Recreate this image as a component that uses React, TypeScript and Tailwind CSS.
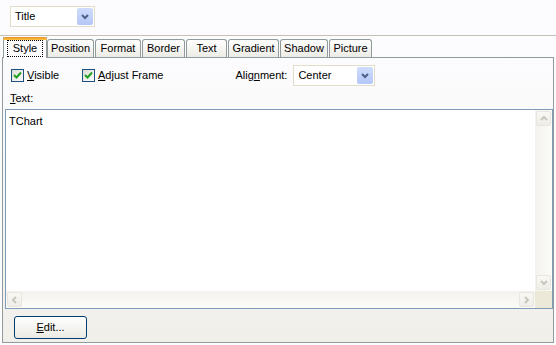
import React from "react";

const tabs = [
  { label: "Position", w: "w-[47px]" },
  { label: "Format", w: "w-[46px]" },
  { label: "Border", w: "w-[43px]" },
  { label: "Text", w: "w-[41px]" },
  { label: "Gradient", w: "w-[51px]" },
  { label: "Shadow", w: "w-[48px]" },
  { label: "Picture", w: "w-[43px]" },
];

function Chevron({ dir, color }: { dir: "up" | "down" | "left" | "right"; color: string }) {
  const paths = {
    down: "M1 2 L4 5 L7 2",
    up: "M1 5 L4 2 L7 5",
    left: "M5 1 L2 4 L5 7",
    right: "M2 1 L5 4 L2 7",
  };
  return (
    <svg width="8" height="8" viewBox="0 0 8 8">
      <path d={paths[dir]} fill="none" stroke={color} strokeWidth="2" />
    </svg>
  );
}

function ComboBox({ value, w }: { value: string; w: string }) {
  return (
    <div className={`${w} h-[21px] border border-[#e2ddc8] bg-white flex items-center p-px`}>
      <span className="flex-1 pl-[3px] text-[11px] text-black">{value}</span>
      <div className="w-[16px] h-[17px] rounded-[2px] bg-gradient-to-b from-[#cfdcfd] to-[#b4c7f6] flex items-center justify-center">
        <Chevron dir="down" color="#4d6185" />
      </div>
    </div>
  );
}

function CheckBox({ children }: { children: React.ReactNode }) {
  return (
    <div className="flex items-center gap-[3px]">
      <div className="w-[13px] h-[13px] border border-[#1c5180] bg-gradient-to-br from-[#dcdbd5] to-white flex items-center justify-center">
        <svg width="9" height="9" viewBox="0 0 9 9">
          <path d="M1 4 L3.5 6.5 L8 1.5" fill="none" stroke="#21a121" strokeWidth="2" />
        </svg>
      </div>
      <span className="text-[11px] text-black">{children}</span>
    </div>
  );
}

function ScrollBtn({ dir }: { dir: "up" | "down" | "left" | "right" }) {
  return (
    <div className="w-[15px] h-[15px] rounded-[2px] border border-[#e8e6dd] bg-gradient-to-b from-[#f9f8f4] to-[#eeede7] flex items-center justify-center">
      <Chevron dir={dir} color="#c9c7bd" />
    </div>
  );
}

export default function App() {
  return (
    <div
      className="w-[556px] h-[345px] bg-[#fcfcfe] overflow-hidden text-black"
      style={{ fontFamily: "'Liberation Sans', Arial, sans-serif" }}
    >
      {/* Top selector */}
      <div className="h-[35px] pl-[10px] pt-[6px]">
        <ComboBox value="Title" w="w-[85px]" />
      </div>
      <div className="h-px bg-[#c4c2b8]" />

      {/* Tabs */}
      <div className="flex items-end h-[21px] pl-[3px]">
        <div className="w-[44px] h-[21px] relative z-10 -mb-px border-x border-[#919b9c] bg-[#fcfcfe] flex flex-col">
          <div className="h-[3px] bg-gradient-to-b from-[#e68b2c] to-[#ffc83c] rounded-t-[3px] -mx-px" />
          <div className="flex-1 flex items-center justify-center pb-px">
            <span className="text-[11px] leading-[13px] px-[5px] py-[1px] outline outline-1 outline-dotted outline-black">
              Style
            </span>
          </div>
        </div>
        <div className="flex items-end gap-[1px]">
          {tabs.map((t) => (
            <div
              key={t.label}
              className={`${t.w} h-[18px] border border-b-0 border-[#919b9c] rounded-t-[3px] bg-gradient-to-b from-white to-[#ecebe5] flex items-center justify-center text-[11px]`}
            >
              {t.label}
            </div>
          ))}
        </div>
      </div>

      {/* Panel */}
      <div className="mx-[2px] w-[552px] h-[286px] border border-[#919b9c] bg-gradient-to-b from-[#fcfcfe] to-[#f0efea] flex flex-col">
        <div className="mt-[7px] h-[21px] flex items-center pl-[8px]">
          <div className="w-[71px]">
            <CheckBox>
              <u>V</u>isible
            </CheckBox>
          </div>
          <CheckBox>
            <u>A</u>djust Frame
          </CheckBox>
          <span className="ml-[72px] text-[11px]">
            Alig<u>n</u>ment:
          </span>
          <div className="ml-[6px]">
            <ComboBox value="Center" w="w-[82px]" />
          </div>
        </div>

        <div className="mt-[6px] h-[13px] pl-[7px] text-[11px] leading-[13px]">
          <u>T</u>ext:
        </div>

        {/* Memo */}
        <div className="mt-[4px] ml-[2px] w-[548px] h-[200px] border border-[#7f9db9] bg-white flex flex-col">
          <div className="flex-1 flex">
            <div className="flex-1 pl-[3px] pt-[3px] text-[11px]">TChart</div>
            <div className="w-[17px] flex flex-col items-center justify-between py-px bg-gradient-to-r from-[#f3f2ee] to-[#fbfbf8]">
              <ScrollBtn dir="up" />
              <ScrollBtn dir="down" />
            </div>
          </div>
          <div className="h-[17px] flex">
            <div className="flex-1 flex items-center justify-between px-px bg-gradient-to-b from-[#f3f2ee] to-[#fbfbf8]">
              <ScrollBtn dir="left" />
              <ScrollBtn dir="right" />
            </div>
            <div className="w-[17px] bg-[#ece9d8]" />
          </div>
        </div>

        <div className="mt-[7px] ml-[11px]">
          <div className="w-[73px] h-[23px] rounded-[3px] border border-[#003c74] bg-gradient-to-b from-white to-[#ebeae3] flex items-center justify-center text-[11px]">
            <span>
              <u>E</u>dit...
            </span>
          </div>
        </div>
      </div>
    </div>
  );
}
